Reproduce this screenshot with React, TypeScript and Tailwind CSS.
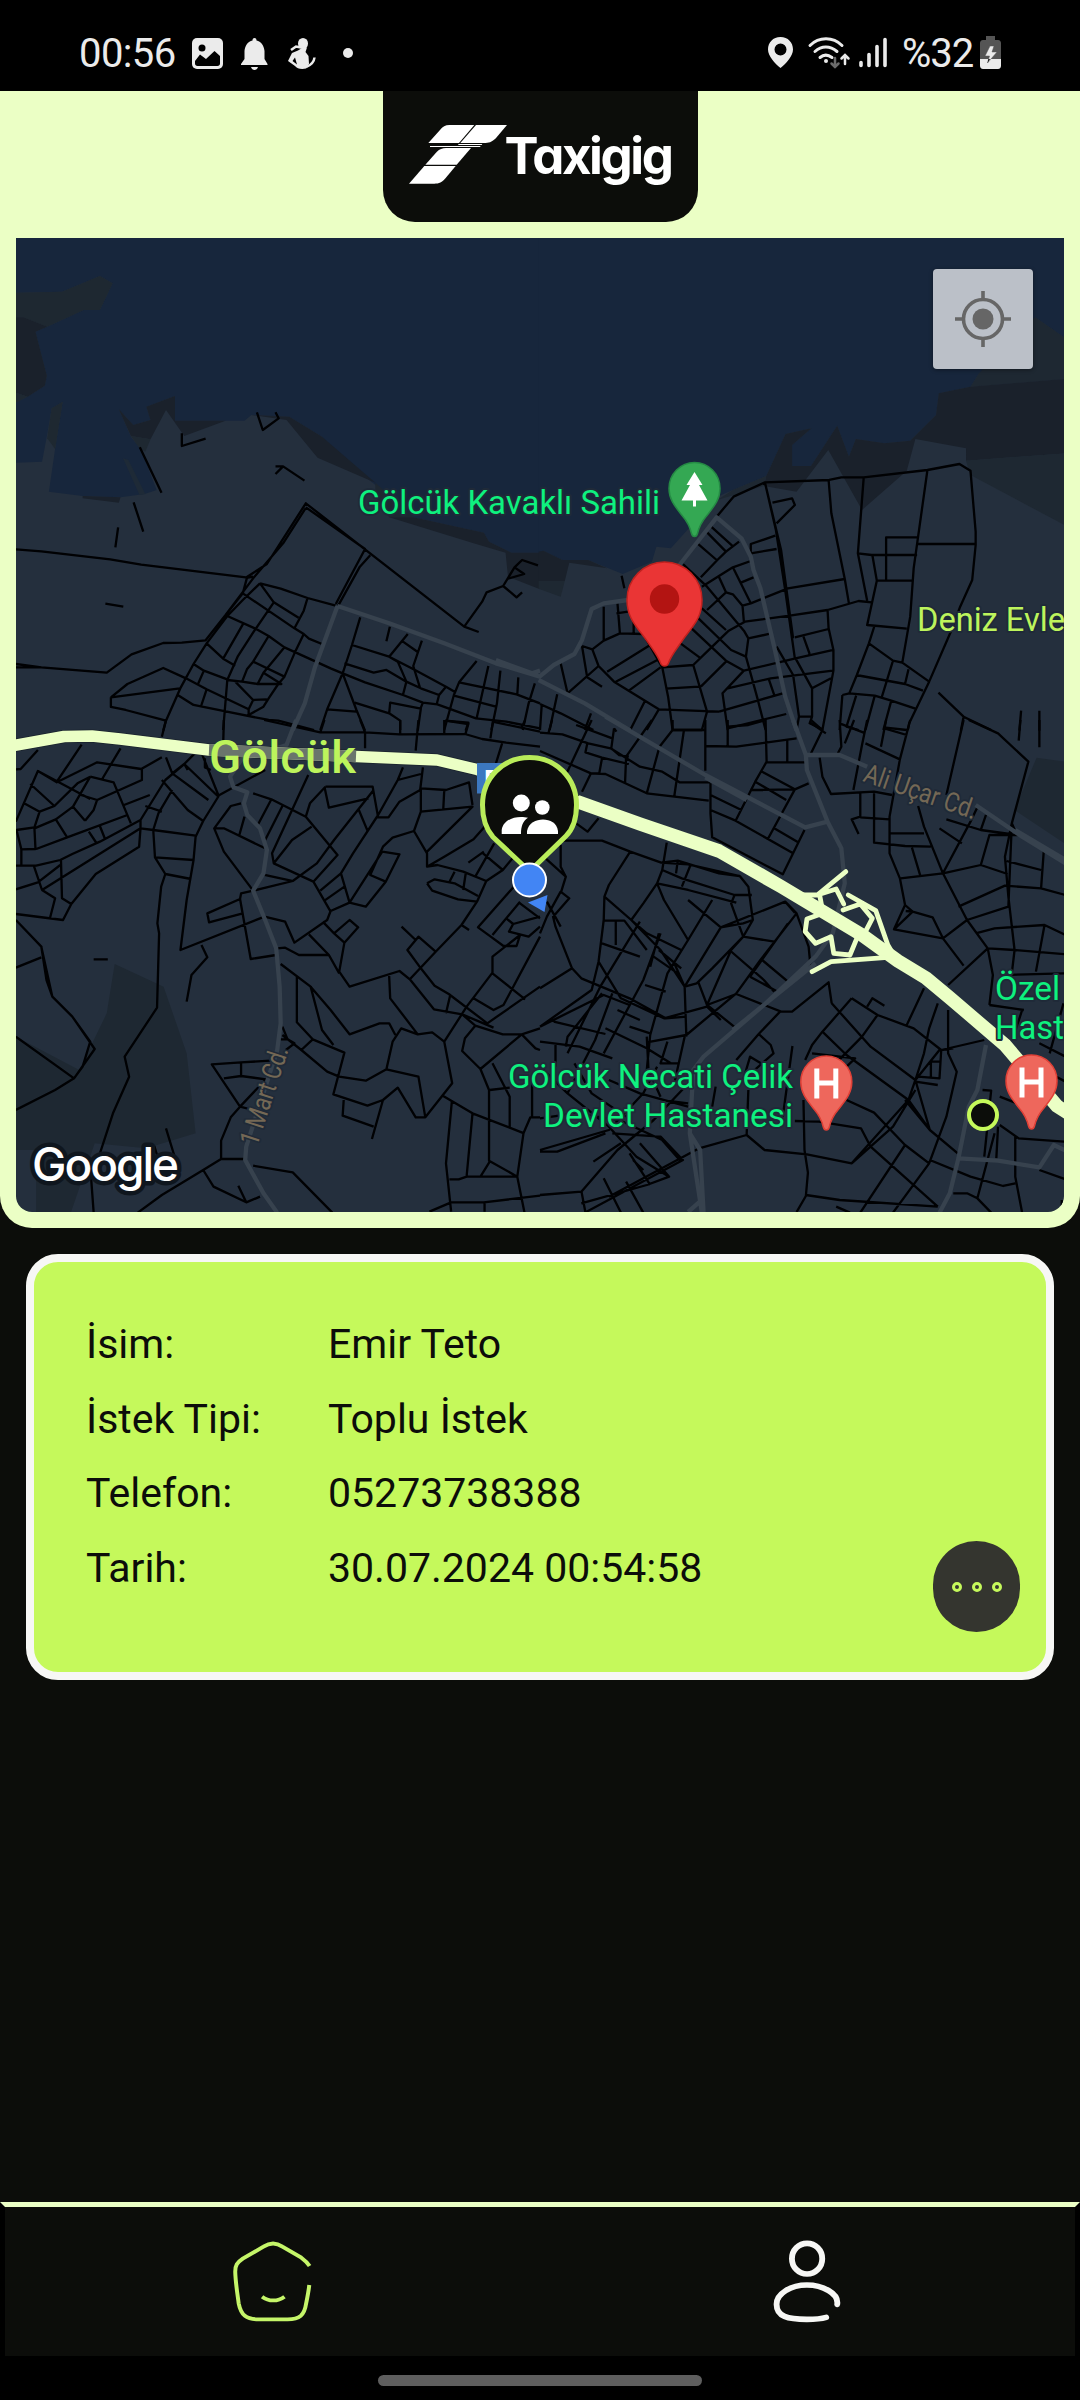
import React from "react";

/** Street geometry is stored per map tile; each tile keeps its own coordinate grid. */
type Tile = {
  transform: string;
  water?: string;
  patches?: { d: string; fill: string }[];
  avenues: string;
  streets: string;
};

const NW: Tile = {
  transform: "translate(0 230) scale(0.34439 0.33333)",
  water:
    "M46 20H1572V968H1485L1420 935 1405 908 1200 862 1090 765 1000 690 935 620 840 560 730 555 710 572H508V498L425 530 437 570 387 585 345 538 380 620 410 660 455 780 420 792 350 802 240 798 142 785 160 657 182 515 150 535 135 625 122 695 46 698V518L80 500 130 467 136 437 103 305 137 290 243 240H290L327 160 290 138 180 185 46 188Z",
  patches: [
    { d: "M46 188 180 185 290 138 327 160 290 240H243L137 290 68 262H46Z", fill: "#1e2831" },
    { d: "M46 262H68L137 290 103 305 136 437 130 467 80 500 46 488Z", fill: "#1a212b" },
    { d: "M46 488 80 500 46 518Z", fill: "#1e2831" },
    { d: "M425 530 508 498V572H655L535 618 482 540 437 628 380 618 345 538 387 585 437 570Z", fill: "#1a212b" },
    { d: "M380 618 437 628 422 665 405 655Z", fill: "#1e2831" },
    { d: "M150 535 182 515 160 657 137 625Z", fill: "#1e2831" },
    { d: "M357 685 373 690 422 792 405 795Z", fill: "#1e2a37" },
    { d: "M240 798 350 802 345 818 240 805Z", fill: "#1a212b" },
    { d: "M730 555 840 560 935 620 1090 758 922 683 832 570Z", fill: "#1a212b" },
    { d: "M1090 758 1200 862 1130 862 1090 800Z", fill: "#1e2731" },
    { d: "M1130 862H1200L1405 908 1420 935 1485 968H1568V1078L1475 1040 1468 968 1375 940Z", fill: "#1a212b" },
  ],
  avenues: "M980 1128 1130 1180 1290 1240 1440 1300 1568 1340M1440 1290 1545 1330 1568 1322M980 1128 915 1310 885 1420 850 1500",
  streets:
    "M746 547 763 600 809 565 800 547M528 610V648L597 626M800 709H822L884 752M822 709 800 732M406 652 469 788M388 817 416 905M343 892 335 952" +
    "M46 958 120 964 320 988 410 1004 720 1043 735 1040M306 1121 358 1130M46 1302 120 1312 310 1328 382 1273 474 1239 528 1238 597 1231 655 1155 705 1090 718 1040 775 1002 888 820 1348 1190 1390 1206M1348 1190 1400 1115 1413 1087 1461 1068 1500 1102 1516 1087M1461 1068 1494 1012 1516 990 1562 1006M1494 1012 1522 1032 1475 1046M46 1312 120 1312" +
    "M888 834 822 940 735 1045 655 1155M888 832 1060 957 975 1122M1075 976 1045 1010 982 1127M755 1060 815 1076 893 1104 975 1127M755 1060 705 1110 660 1158 600 1240 562 1302 525 1372 482 1472 474 1502" +
    "M755 1060 795 1117 867 1163M893 1104 882 1142 855 1195M705 1090 855 1195 882 1212 897 1226 935 1242M660 1158 740 1195 780 1218 826 1252 960 1315 995 1330 1060 1357 1170 1395 1228 1418 1270 1423 1382 1465 1470 1475 1568 1495M795 1117 740 1200 690 1280 660 1350 648 1500M708 1178 648 1286 683 1307M600 1240 648 1286M780 1218 735 1295 717 1318 703 1355M882 1212 855 1270 826 1340 808 1362 780 1405 765 1430 722 1455V1438L735 1410 775 1408M826 1252 765 1328 748 1362M735 1295 826 1340M765 1328 817 1362H748L703 1355 660 1350M683 1355 735 1410" +
    "M562 1302 592 1322 660 1348M592 1322 575 1362M322 1402 370 1362 474 1314 540 1345 600 1378 722 1438M322 1402 522 1375M322 1402V1431L365 1440 482 1472M516 1395 562 1425 648 1443 780 1470 808 1472 912 1500M600 1378 583 1431" +
    "M1046 1162 1022 1245 995 1330 950 1438 930 1500M1022 1245 1130 1280 1205 1320 1295 1370 1320 1385M1000 1300 1085 1328 1122 1320 1180 1355 1222 1375 1275 1395 1268 1423M1132 1190 1122 1234M1184 1212 1130 1280 1155 1295 1180 1355 1170 1395M1166 1232 1213 1266M1225 1232 1200 1308 1220 1375M995 1330 1035 1440 1060 1502M950 1438 1035 1445M1030 1418 1130 1450 1162 1472V1500M1130 1450 1133 1418 1222 1436 1213 1502M1228 1418 1220 1438M1295 1370 1275 1395" +
    "M1384 1293 1333 1357 1318 1395 1290 1500M1333 1357 1500 1393 1568 1420M1318 1397 1440 1430M1418 1308 1384 1465M1453 1322 1443 1420 1427 1500M1505 1342 1502 1395M1553 1360 1535 1420 1518 1500M1293 1472 1360 1478 1352 1502",
};

const NE: Tile = {
  transform: "translate(540 230) scale(0.34439 0.33333)",
  water:
    "M-4 20H1526V325L1438 262 1400 300 1275 430 1250 470 1158 490 1150 555 1075 632 1000 640 917 627 897 680 863 587 787 708H732V645L788 595 713 612 657 738 560 780 515 800 380 955 338 950 325 995 240 1032 140 990H65L10 962-4 965Z",
  patches: [
    { d: "M1438 262 1526 325V447L1250 470 1275 430 1340 360Z", fill: "#1e2832" },
    { d: "M1526 447 1250 470 1158 490 1150 555 1075 632 1000 640 917 627 897 680 863 587 787 708H732V645L788 595 713 612 657 738 650 768 745 785 837 660 935 840 1065 722 1090 627 1237 655V692L1526 670Z", fill: "#1a212b" },
    { d: "M1237 692 1526 670V887L1250 735Z", fill: "#1e2832" },
    { d: "M-4 965 10 962 65 990H140L195 1015 85 998 72 1053H-4Z", fill: "#1a212b" },
    { d: "M-4 1053H72L60 1100-4 1076Z", fill: "#1e2832" },
    { d: "M657 738 560 780 515 810 650 768Z", fill: "#1e2832" },
  ],
  avenues:
    "M405 1005 513 862 585 925 612 980 620 1020 640 1075 680 1250 712 1400 745 1502M255 1110 185 1120 150 1137 122 1230 100 1272 40 1305-4 1342M-4 1350 130 1420 262 1502",
  streets:
    "M513 860 562 800 653 757 840 750 875 742 940 742 1125 720 1218 702 1250 722 1265 905V945L1255 1050 1220 1130 1195 1200 1130 1355 1072 1480 1068 1500M653 757 685 900 712 1080 740 1285M653 757 700 960 735 1225M675 818 732 805 740 825 687 880M838 750 846 850 885 1047 897 1120M940 742 923 970 963 975 1095 975M923 970 950 1112M1125 720 1085 1015 1075 1160 1052 1298M1098 922H1005V1052M1098 942H1265M965 975 978 1052H1085M978 1052 950 1185 1065 1196" +
    "M972 1185 955 1240 920 1335 898 1390M955 1240 1025 1292 1052 1298 1130 1355M1025 1292 992 1403M918 1335 1060 1362 1112 1382M1070 1318 1060 1362M878 1395 898 1390 972 1397 1020 1412 1090 1436M878 1395 870 1500M918 1397 890 1490 925 1500M972 1397 945 1500M1020 1412 997 1500M997 1492 1065 1500M1157 1388 1230 1460 1310 1500M1230 1460 1222 1502M1397 1442 1392 1502M1450 1442V1502" +
    "M885 1047 720 1075 612 1120 588 1127 560 1093 540 1087 520 1042M963 1117 925 1113 835 1140 725 1157 595 1175 548 1202 500 1250 445 1305 355 1312M588 1127 592 1175M683 917 612 942V970L687 957M612 993 560 1012 470 1070M560 1012 612 1120M585 1057 620 1042M578 935 540 965 515 990 467 1042M457 940 513 990M483 905 540 965M497 890 558 947" +
    "M415 1002 485 1070 592 1202 605 1225 665 1212M605 1225 598 1280 630 1400 655 1500M485 1140 540 1087M470 1135 540 1200M460 1165 555 1260 598 1280M437 1192 540 1292 592 1322 742 1285 852 1260M405 1238 467 1285M592 1322 530 1390 545 1500M545 1375 670 1345 850 1322M467 1370 540 1295M520 1445 705 1390M545 1495 715 1452M665 1350 680 1395" +
    "M835 1140 838 1195 852 1260V1322L820 1500M740 1222 838 1197M765 1220 783 1272M742 1285 790 1375V1460H750M687 1250 735 1335 752 1460 745 1500M790 1375 845 1345M790 1460 783 1480 820 1498" +
    "M237 1037 245 1075M185 1130V1230M225 1120 232 1210M222 1150 255 1145M272 1170V1210M152 1258 185 1232 232 1210 300 1212M122 1248 152 1258 170 1308 215 1355 345 1438 520 1445M122 1248 137 1342 180 1370M170 1308 80 1390 60 1300M195 1325 320 1245M220 1355 345 1288M258 1382 350 1312M300 1212 355 1312 372 1400 385 1500H470L485 1445 445 1305M365 1376 462 1370M305 1412 262 1500M345 1438 310 1500M0 1422 60 1450 155 1500M50 1393 28 1500M148 1450 130 1500M0 1500 5 1425M215 1495 222 1505",
};

const SW: Tile = {
  transform: "translate(0 720) scale(0.34439 0.33333)",
  patches: [
    { d: "M333 732 475 800 542 1000 568 1240 425 1285 275 1270 205 1480H105V1290H46V950L230 1050 310 880Z", fill: "#1e2832" },
  ],
  avenues:
    "M860 0 832 75 700 120 668 170 678 202 718 217 708 250 718 285 755 325 775 390 765 460 735 512 770 600 802 685 812 800 815 910 805 990 715 1280 712 1320 765 1420 805 1478",
  streets:
    "M482 0 470 50M650 0 648 75M767 0 930 37 942 0M930 37H1060L1160 43 1350 42 1400 57 1470 68 1568 80M1046 0 1060 37V85M1162 0V42M1215 0 1207 92M1290 0V40M1293 2 1360 12 1352 40M1432 0 1424 55M1458 70 1440 130M1525 0 1515 22M1430 5 1568 35" +
    "M110 90 60 147 46 148M237 74 165 185M350 85 295 180M46 305 110 153 262 237M88 192 158 258M110 153 165 187 282 127 410 147 470 112M262 170 330 187 380 310M262 170 212 260 247 302M235 225 282 240 412 180V147M212 260 162 298 195 352M162 298 100 325 103 387 62 388 48 330 100 322 115 275 158 258 225 190 262 170M70 250 115 275M282 240 272 270 247 302M195 352 370 285M258 335 282 372M290 318 305 357M105 387 195 352M62 388V437H105L175 420 210 402 290 365 408 300 480 180 535 132 545 150M46 437H62M46 508 110 487 175 435M98 437 122 510 408 325 404 380 278 462 207 552 180 535 177 418M122 510 160 535 145 595M207 552 183 600 46 582M408 300V325L445 330 568 347M360 255 435 225M422 258 470 275M482 112 500 160 605 240M470 180 545 270 590 303M500 160 535 132 580 85 635 228M595 115V142L612 150M535 132 632 228 770 150" +
    "M500 210 460 280 445 330 450 412 480 462 468 500 457 610 462 640 456 863 362 1010 375 1070 328 1180 265 1380 272 1478M450 412 562 420M480 462 555 477M635 228 590 303 568 350 562 420 542 540 524 690 768 590 828 605 855 668 950 600 960 573 1015 548 1062 560 1120 485 1160 403 1110 395 1015 548M585 675 602 712 556 765 542 845M700 250 670 258 622 325 650 395 735 512M622 325 650 325 770 385M710 290 695 345M735 220 788 238 888 290 980 405 910 485M788 238 750 312M820 258 770 360M848 270 790 400 795 430 910 485 960 575M945 200 900 250 888 290M905 320 848 360 795 430M945 200H1082L1098 292H1128L1160 245 1220 210 1228 142M1170 142 1155 180 1098 285 1025 400 990 460 1015 548M943 205 955 263 1070 235M1085 210 970 360 920 430 850 483 735 512 700 520 697 537 602 580 607 607 705 580M895 165 848 270M1155 180 1222 162M1042 270 1067 332M990 460 930 512M1000 500 942 542M697 537 728 717 802 705M768 465 848 483" +
    "M1222 205V275L1372 260 1240 395M1222 205 1295 210 1362 187 1372 255M1290 210 1287 270M1222 275 1202 333 1240 400V440L1270 435 1345 455 1412 483 1460 450 1500 400M1202 333 1140 353 1112 380 1075 465 1120 485M1240 440 1290 410 1375 358 1420 305M1400 398 1460 450M1360 428 1405 395M1320 455 1303 490M1352 462 1345 510M1435 370 1380 470M1412 483 1385 545 1340 615 1362 630M1240 490 1262 478 1320 490 1388 528M1240 490 1255 512 1330 538 1385 545M1492 500 1388 622 1425 650 1462 678H1500L1510 645M1510 545 1430 645M1470 595 1490 612 1568 590M1490 612 1478 635 1535 650 1568 620M1510 550 1568 595" +
    "M970 640 1015 600 1040 622 1000 668 985 755 1015 800 1160 753 1190 778 1265 695 1340 615M937 605 970 640 1000 668M897 643 955 705 985 760M805 685 828 683 868 705H955M815 732 902 800 960 870 1015 943 1102 910H1130L1148 945M862 768V907L908 958 875 990M902 800 935 930 968 975M1130 768 1133 835 1213 943 1165 925 1140 965 1122 1048 1062 1082 985 1070 950 1055 875 990 820 945M908 958 1000 998 968 1123 1067 1157 1112 1140 1155 1103 1207 1192H1235L1215 1070 1122 1048M1112 1140 1080 1257M998 1140 995 1187 1085 1220M1213 943 1255 937 1290 965 1313 1090 1235 1192M1190 778 1260 868 1342 883 1433 923M1166 620 1207 660M1265 695 1215 650 1183 690 1222 745 1262 797 1303 822 1415 910 1568 800M1308 822 1295 880M1510 645 1430 710V758L1355 860 1290 965M1430 760 1525 838M1375 835 1433 870 1462 855 1568 650M1342 883 1380 917 1460 943H1515L1568 925M1380 917 1350 955 1342 993 1395 1047 1515 943 1555 985 1568 990" +
    "M1395 1047 1420 1110V1322L1502 1370 1520 1240 1540 1192H1568M1430 1030 1480 1130V1225M1422 1110 1480 1103M1545 1090V1192M1282 1125 1372 1180 1522 1240M1312 1145 1295 1330 1310 1475M1372 1180 1355 1368M1305 1378H1332L1355 1370H1502L1523 1478M1422 1325 1395 1370M1247 1475 1310 1447H1405L1568 1427M1407 1447V1475" +
    "M46 600 120 680 152 830 210 890 275 987 215 1075 160 1110 46 1170M46 743 120 712M120 680 135 780 152 830M210 890 262 965 240 1040 215 1075 46 950M272 718H313" +
    "M482 1225 510 1320M448 1278 465 1335M785 1022 700 1027 615 1033 697 1160 670 1192 642 1262V1317H710M650 1075 700 1068 772 1078 697 1160 735 1170M700 1027V1068M642 1317 590 1350 470 1425 400 1478M590 1350 620 1400 715 1447 755 1430M692 1397 715 1447M735 1337 850 1357 965 1478M820 920 835 958 855 970 830 990M815 958H835",
};

const SE: Tile = {
  transform: "translate(540 720) scale(0.34439 0.33333)",
  patches: [{ d: "M1442 113 1526 125V372L1378 270Z", fill: "#1e2832" }],
  avenues:
    "M190-10 480 165 770 322 835 305M480 172 600 240M735 0 772 105 775 150 835 305 875 385 885 490 850 640 800 710 650 855 475 1010 445 1050 435 1240 465 1290 475 1478M800 730 560 930M435 1240 470 1478M430 1476 470 1440M772 105H870L950 140M1265 255 1400 350 1526 430M1380 330 1526 420M1295 975 1270 1110 1245 1160 1215 1315 1190 1420 1160 1478M1215 1315 1330 1322 1450 1342 1492 1275 1526 1292",
  streets:
    "M35 0 25 38M0 38 65 43 140 70 205 85 290 140 355 155 405 187H495M150 0 75 165M215 25 207 85 230 105 258 110M325 0 250 110 247 188M137 72 132 97 180 113 258 132M105 15 210 55M385 0V30L347 80 310 220M385 30H478M418 30 390 228M0 93 148 160 122 215M180 115 172 160 148 160M148 160 190 162 310 220 490 242M545 20 605 15 655 0 658 125 625 185 568 302M480 0V78L570 80 745 55M545 0V80M480 78V152M718 58V127M658 127H775M645 155 740 208 780 190M625 185 715 240M610 210 740 208 660 360M495 190V280L500 352 705 463 768 330M495 225 585 270M495 270 568 302 735 400M680 325 752 368" +
    "M787 0 820 30 787 100M785 8 830 40M870 0 875 80 865 100M870 10 940 38M885 70 912 0M950 0 935 75 910 210M945 70 1045 118M1005 0 990 80M1000 25 1065 45M1075 0 1045 118 1015 290V400L1045 475 1060 555 1028 628 1170 655M812 113 820 170 845 222 970 215 1022 225M930 215V290L905 298 925 342M970 220V368L1060 378 1135 380M930 292 1015 298M1015 340H1115M1230 0 1180 225M1245 0 1330 40 1418 125 1370 310 1350 410 1360 530 1378 690M1395 0 1390 62M1450 0V82M1098 258 1115 320 1170 460 1240 600 1300 685M1270 262 1250 305 1170 460M1160 325 1225 370M1180 298 1280 330 1385 345H1305L1280 435M1295 285 1280 330M1080 383 1105 470M1047 475 1170 460 1280 435 1358 462M1355 423 1455 450M1463 390 1455 505M1215 560 1350 497 1455 505 1526 525M1240 600 1360 560 1370 310 1385 345M1060 555 1082 575 1028 628M1082 575 1140 592 1170 655 1230 737M1062 573 1082 575M1265 640 1320 625 1465 615 1526 645M1170 655 1240 600M1300 685 1378 690 1526 703M1300 685 1185 795M1300 685 1315 765 1305 855M1378 690 1370 760M1465 615 1440 755M1340 765 1526 760M1305 855 1405 870" +
    "M60 362H180L262 395 352 428 430 433 580 468 605 500 618 600 590 650 680 665M352 428 400 422 520 460 580 468M60 375V440L75 470M105 310 138 335 170 295M368 368 355 450 340 490 300 550 265 600M262 395 200 495 187 530 185 600 170 725 150 810 0 920M187 530 265 600 350 690 420 800 390 730M187 602H245L310 690M220 602V675M180 670 290 710M340 490 430 510 570 548M437 435 412 500M355 450 412 475 565 525 555 550 590 650 555 690 485 855 570 925M340 490 360 540 430 660M500 540 430 660 370 760 320 945 310 1050M400 422 395 460M565 525H615M420 800 455 790 500 745 590 650M550 690 650 780 680 815M610 770 720 610M645 720 720 785M610 770 690 815M525 622 712 545 745 580 640 720 570 820 425 945 310 967M525 622 590 610 618 600M745 580 780 680 785 735M712 545 740 578M430 540 525 622 420 800M420 800 425 950M460 787 485 855 570 822 700 875H732L838 787 847 850M525 900 485 860 360 895 235 835 170 725M0 805 93 745 45 620 38 590 85 535 60 515 20 590 0 640M20 545 60 620M0 400 75 470 60 520M93 745 120 775 260 835 365 895 425 890M290 605 175 800 80 1000M350 640 300 780 185 1000M265 600 310 640 410 690M345 690 410 745M330 710 400 760M345 640 320 740M0 920 185 825 260 855M180 820 80 950 75 980M40 905 190 942M210 820 160 960 80 1120M0 965 115 980 210 1015M45 975V1040M190 925 310 985 380 1030M225 870 290 900M260 920 320 940M305 795 365 815M310 950 315 1050 350 1130M370 965 350 1030H400M420 950 390 1090" +
    "M0 1040 80 1120 200 1220 280 1310 375 1370 310 1395 120 1450M100 1030 150 1120 250 1190M200 1080 290 1120 430 1160M340 1040 300 1120 200 1230 0 1290M440 1080 330 1200 225 1290 120 1415 0 1425M350 1140 430 1150M510 1100 500 1160M0 1195 100 1180 230 1200M210 1240 350 1250 415 1320 130 1478M155 1325 235 1270M600 1245 462 1285 200 1430M600 1245 652 1290 775 1303 905 1330 1070 1140 1090 1080 1160 990M600 1245 605 1110M350 1255 410 1325M260 1300 320 1395M120 1412 132 1478M185 1375 235 1478M250 1385 300 1478M270 1320 300 1350M230 1200 355 1260M290 1270 375 1370M0 1295 50 1295 190 1240" +
    "M697 875 635 942 570 1020M635 942 670 975 678 1000 590 1080 610 1010 650 1035M733 978 705 1190M847 850 960 980 1090 1080 1132 1230M905 835 820 935 790 975 770 1020M905 835 980 885 1085 925 1165 990 1290 960M950 860 965 835 1000 857M980 885 935 950 830 1060M820 935 890 1005 1070 1140 1132 1230 1213 1300M790 1000 915 1015 865 1065M890 1140 970 1178 1060 1275 1130 1330M765 1140 768 1290 778 1358 772 1428 745 1476M740 1203 810 1205 932 1225 960 1280 1155 1460M772 1425 870 1440 1155 1460M1213 1300 1132 1230 1060 1140M1060 1275 930 1478M1130 1330 1025 1478M860 1460 900 1478M905 1330 1025 1220 1090 1110M1115 805 1065 915M1155 850 1130 925 1115 1000 1090 1080M1185 870V1000L1210 1055 1180 1190 1130 1330M1098 1070 1160 1075 1165 990M1090 1085 1155 1095M1135 1070V1025H1165M1132 1320 1250 1370 1345 1398 1380 1390M1200 1420H1240L1270 1435 1310 1478M1380 1250V1370L1400 1478M1320 1240 1270 1435M1285 1110 1310 1112 1290 1310M1335 1215 1390 1255 1526 1265M1330 1220 1325 1315M1335 1130 1385 1150M1450 1350 1526 1378M1515 1440V1478M1165 990 1200 985M1450 970 1526 1010M1480 1060 1526 1085M1400 870 1375 950M1520 850 1480 1000",
};

const TILES = [NW, NE, SW, SE];

const HIGHWAY =
  "M14 745.500 64 736.500 92 736 120 739 209 750 356 756.500 437 760 477 769.500 577 801.500 640 824 719 851 781 886.500 862 935 898 961 926 978 950 998 1005 1045 1057 1106 1068 1113";
const HIGHWAY_EAST = "M577 801.500 640 824 719 851 781 886.500 862 935 898 961 926 978 950 998 1005 1045 1057 1106 1068 1113";

function TileShapes({ tile }: { tile: Tile }) {
  return (
    <g transform={tile.transform}>
      {tile.water && <path d={tile.water} fill="#17263c" />}
      {tile.patches?.map((p) => (
        <path key={p.d} d={p.d} fill={p.fill} />
      ))}
    </g>
  );
}

function Pin({ x, y, fill, stroke, children }: { x: number; y: number; fill: string; stroke: string; children: React.ReactNode }) {
  return (
    <g transform={`translate(${x} ${y})`}>
      <path
        d="M0-25.500C14-25.500 25.500-14 25.500.500C25.500 12 19 19 12 28C6 35 4.500 39 3 45.500C2 49.500-2 49.500-3 45.500C-4.500 39-6 35-12 28C-19 19-25.500 12-25.500.500C-25.500-14-14-25.500 0-25.500Z"
        fill={fill}
        stroke={stroke}
        strokeWidth="1.500"
      />
      {children}
    </g>
  );
}

const LABEL = { fontFamily: "Roboto, sans-serif", stroke: "#1f2a38", strokeWidth: 4, paintOrder: "stroke", strokeLinejoin: "round" } as const;

function CityMap() {
  return (
    <svg viewBox="16 238 1048 974" className="block h-[974px] w-[1048px]">
      <rect x="16" y="238" width="1048" height="974" fill="#242f3d" />
      {TILES.map((t) => (
        <TileShapes key={t.transform} tile={t} />
      ))}
      {TILES.map((t) => (
        <g key={t.transform} transform={t.transform}>
          <path d={t.streets} fill="none" stroke="#000103" strokeWidth="2.300" strokeLinejoin="round" vectorEffect="non-scaling-stroke" />
        </g>
      ))}
      {TILES.map((t) => (
        <g key={t.transform} transform={t.transform}>
          <path d={t.avenues} fill="none" stroke="#37424e" strokeWidth="4.300" strokeLinejoin="round" vectorEffect="non-scaling-stroke" />
        </g>
      ))}

      {/* State highway and interchange ramps */}
      <g fill="none" strokeLinejoin="round">
        <path d={HIGHWAY} stroke="#1a232c" strokeWidth="13" />
        <path d={HIGHWAY} stroke="#ebffc5" strokeWidth="11.500" />
        <path d={HIGHWAY_EAST} stroke="#ebffc5" strokeWidth="13.500" />
        <path d="M209 750 356 756.500" stroke="#6a756c" strokeWidth="11.500" />
        <g transform={SE.transform}>
          <path
            d="M735 525H805L888 455M805 525 860 507 882 552M812 525 822 580 775 597 770 635 800 670 845 650 853 700 900 705 920 655M895 525 975 572 1010 675 1030 710M880 570 930 552 965 595 945 635H900M790 755 845 725 1010 712"
            stroke="#ebffc5"
            strokeWidth="4.800"
            strokeLinecap="round"
            vectorEffect="non-scaling-stroke"
          />
        </g>
      </g>

      {/* Place labels */}
      <g {...LABEL}>
        <text x="358" y="513.500" fontSize="34" fill="#0ef17f" textLength="302" lengthAdjust="spacingAndGlyphs">Gölcük Kavaklı Sahili</text>
        <text x="793" y="1088" textAnchor="end" fontSize="34" fill="#0ef17f" textLength="285" lengthAdjust="spacingAndGlyphs">Gölcük Necati Çelik</text>
        <text x="793" y="1127" textAnchor="end" fontSize="34" fill="#0ef17f" textLength="250" lengthAdjust="spacingAndGlyphs">Devlet Hastanesi</text>
        <text x="995" y="1000" fontSize="34" fill="#0ef17f" textLength="65" lengthAdjust="spacingAndGlyphs">Özel</text>
        <text x="995" y="1039" fontSize="34" fill="#0ef17f" textLength="69" lengthAdjust="spacingAndGlyphs">Hast</text>
        <text x="917" y="630.500" fontSize="34" fill="#bdf45c" textLength="148" lengthAdjust="spacingAndGlyphs">Deniz Evle</text>
        <text x="209" y="773" fontSize="47" fontWeight="500" fill="#bdf45c" stroke="none" textLength="147" lengthAdjust="spacingAndGlyphs">Gölcük</text>
        <text x="0" y="0" fontSize="27" fill="#746855" transform="translate(257 1147) rotate(-72)" textLength="102" lengthAdjust="spacingAndGlyphs">1 Mart Cd.</text>
        <text fontSize="27" fill="#746855" transform="translate(862 781) rotate(19)" textLength="118" lengthAdjust="spacingAndGlyphs">Ali Uçar Cd.</text>
      </g>

      {/* Park */}
      <Pin x={694.5} y={488} fill="#34a853" stroke="#258a44">
        <path d="M0-16 8-3H4.500L13 12.500H1.500V18.500H-1.500V12.500H-13L-4.500-3H-8Z" fill="#fff" />
      </Pin>

      {/* Destination */}
      <path d="M664.500 562C685 562 702 579 702 600C702 619 691 628 682 641C673 654 671 656 668.500 663C667 667 662 667 660.500 663C658 656 656 654 647 641C638 628 627 619 627 600C627 579 644 562 664.500 562Z" fill="#ea3535" stroke="#c3221f" strokeWidth="1.500" />
      <circle cx="664.500" cy="599" r="14.700" fill="#b31412" />

      {/* Hospitals */}
      {[{ x: 826.3, y: 1081.5 }, { x: 1031.5, y: 1080.5 }].map((p) => (
        <Pin key={p.x} x={p.x} y={p.y} fill="#ee675c" stroke="#e04137">
          <path d="M-9.500-13V17M9.500-13V17M-9.500 1.500H9.500" stroke="#fff" strokeWidth="5" fill="none" />
        </Pin>
      ))}

      <circle cx="983" cy="1115" r="14" fill="#0c0d0a" stroke="#c5f95b" strokeWidth="4" />

      {/* Parking sign, rider pin and own position */}
      <rect x="477" y="763" width="36" height="30.500" fill="#3c78c0" />
      <text x="484" y="790" fontFamily="Roboto, sans-serif" fontSize="27" fontWeight="700" fill="#fff">P</text>
      <path d="M528 902.500 547.500 895 544.500 912Z" fill="#4285f4" />
      <path d="M526 868 493 837C485 828 482.500 816 482.500 805C482.500 778 503 757.500 529.500 757.500C556 757.500 576.500 778 576.500 805C576.500 816 574 828 566 836L533 868Z" fill="#0c0d0a" stroke="#b9ec5a" strokeWidth="5" />
      <g fill="#fff">
        <circle cx="521.300" cy="803" r="8.500" />
        <circle cx="542.300" cy="807.500" r="7.300" />
        <path d="M501.700 834V830C503 821 512 817 521 817C523.500 817 526 817.300 528 817.800C523 821 521 826 521 834Z" />
        <path d="M527 834V831C528.500 823 536 819.500 543 819.500C550 819.500 557 823 558 831V834Z" />
      </g>
      <circle cx="529.500" cy="880" r="16.500" fill="#4285f4" stroke="#fff" strokeWidth="2" />

      {/* Map attribution */}
      <text x="32" y="1181" fontFamily="Inter, sans-serif" fontSize="46" fontWeight="500" fill="#fff" stroke="#0f161e" strokeWidth="9" strokeLinejoin="round" paintOrder="stroke" className="tracking-[-2px]">
        Google
      </text>
    </svg>
  );
}

function StatusBar() {
  return (
    <div className="flex h-[91px] items-start bg-black pt-[30px] pl-[79px] pr-[79px] text-[#ebebeb]">
      <span className="w-[113px] whitespace-nowrap text-[40px] leading-[48px] tracking-[-0.6px]">00:56</span>
      <svg viewBox="192 31 170 48" className="h-[48px] w-[170px]" fill="#ebebeb">
        <rect x="192" y="39" width="31" height="31" rx="5" />
        <circle cx="202" cy="49" r="3.500" fill="#000" />
        <path d="M195 62 200 55.500 206 60 214.500 52 220 57V64.500C220 66 219 67 217.500 67H197.500C196 67 195 66 195 64.500Z" fill="#000" />
        <path d="M254.500 39C256 39 256.500 40 256.500 41.500C261 42.500 264 46.500 264.500 52V60L267.500 65V66H241V65L244.500 60V52C245 46.500 248 42.500 252.500 41.500C252.500 40 253 39 254.500 39ZM251 68H258C257.500 70 256 71 254.500 71C253 71 251.500 70 251 68Z" />
        <ellipse cx="303" cy="44.500" rx="5" ry="5.500" />
        <path d="M302 49 307 48.500 305.500 53 308.500 57 309 65 306 69.500C301 70.500 297 69.500 295 67L288 62 292 54 298 51.500ZM295 58.500 292.500 62 297 65.500Z" fillRule="evenodd" />
        <path d="M291 51 296 47.500 301 48.500M306 68C310 66.500 314 64 314.500 58.500" stroke="#ebebeb" strokeWidth="2.500" fill="none" />
        <circle cx="348" cy="54" r="5" />
      </svg>
      <div className="flex-1" />
      <svg viewBox="766 31 122 48" className="h-[48px] w-[122px]" fill="none" stroke="#ebebeb" strokeLinecap="round">
        <path d="M780.500 38C788 38 793 43.500 793 50.500C793 57 786 64.500 780.500 69C775 64.500 768 57 768 50.500C768 43.500 773 38 780.500 38ZM780.500 44.500A6 6 0 1 0 780.500 56.500A6 6 0 1 0 780.500 44.500Z" fill="#ebebeb" stroke="none" fillRule="evenodd" />
        <path d="M810 46.500C819 37.500 833 37.500 842 46.500M815 52.500C821.500 46.500 830 46.500 837 52.500M820 58.500C823.500 55.500 828 55.500 832 58.500" strokeWidth="3" />
        <circle cx="826" cy="62" r="2" fill="#ebebeb" stroke="none" />
        <path d="M835 59V68M831.500 64.500 835 68 838.500 64.500" stroke="#6b6b6b" strokeWidth="2.500" />
        <path d="M845 65V56.500M841.500 59.500 845 56 848.500 59.500" strokeWidth="2.500" />
        <path d="M861 63.500V66.500M869 55.500V66.500M877 47.500V66.500M885 40.500V66.500" strokeWidth="3.600" />
      </svg>
      <span className="ml-[14px] w-[78px] whitespace-nowrap text-[40px] leading-[48px] tracking-[-1px]">%32</span>
      <svg viewBox="980 31 21 48" className="h-[48px] w-[21px]">
        <path d="M986 37H995V41H998C1000 41 1001 42.500 1001 44V60H980V44C980 42.500 981 41 983 41H986Z" fill="#555" />
        <path d="M980 60H1001V66.500C1001 68.500 1000 70 998 70H983C981 70 980 68.500 980 66.500Z" fill="#ebebeb" />
        <path d="M990 47H994L992 53H997L987.500 64 989.500 57H985Z" fill="#ebebeb" stroke="#555" strokeWidth="0.500" />
        <path d="M990 60H988.500L987.500 64Z" fill="#000" />
      </svg>
    </div>
  );
}

function Brand() {
  return (
    <div className="relative mx-auto h-[131px] w-[315px] rounded-b-[32px] bg-[#0c0d0a]">
      <svg viewBox="383 91 130 131" className="block h-[131px] w-[130px]">
        <g transform="translate(390 100) scale(0.33333)" fill="#fff">
          <path d="M115 129 150 90C158 80 166 75 178 75H253L207 129Z" />
          <path d="M258 75H351L320 112C309 124 300 129 287 129H211Z" />
          <path d="M205 132H277L275 135H205ZM120 138H272L270 141H120Z" />
          <path d="M106 194 140 156C149 147 157 144 168 144H243L200 194Z" />
          <path d="M103 198H197L167 234C156 247 147 251 133 251H57Z" />
        </g>
      </svg>
      <span className="absolute top-[35px] left-[122px] font-['Inter',sans-serif] text-[51px] leading-[60px] font-bold tracking-[-2.4px] text-white [font-feature-settings:'cv11'_1,'ss03'_1]">
        Taxigig
      </span>
    </div>
  );
}

const DETAILS = [
  { label: "İsim:", value: "Emir Teto" },
  { label: "İstek Tipi:", value: "Toplu İstek" },
  { label: "Telefon:", value: "05273738388" },
  { label: "Tarih:", value: "30.07.2024 00:54:58" },
];

function RequestCard() {
  return (
    <section className="relative mx-[26px] mt-[26px] h-[426px] rounded-[32px] border-8 border-[#f7f7f5] bg-[#c5f95b] pt-[46px] pl-[52px] text-[41px] text-[#0c0d0a]">
      <dl>
        {DETAILS.map((row) => (
          <div key={row.label} className="flex h-[74.4px] items-center whitespace-nowrap">
            <dt className="w-[242px]">{row.label}</dt>
            <dd>{row.value}</dd>
          </div>
        ))}
      </dl>
      <button className="absolute top-[279px] right-[26px] flex h-[91px] w-[87px] items-center justify-center gap-[10px] rounded-[44px] bg-[#34352f]" aria-label="Seçenekler">
        <span className="h-[10px] w-[10px] rounded-full border-[3.4px] border-[#c5f95b]" />
        <span className="h-[10px] w-[10px] rounded-full border-[3.4px] border-[#c5f95b]" />
        <span className="h-[10px] w-[10px] rounded-full border-[3.4px] border-[#c5f95b]" />
      </button>
    </section>
  );
}

function TabBar() {
  return (
    <nav className="grid h-[154px] grid-cols-2 border-x-[5px] border-t-[5px] border-x-black border-t-[#ebffc5] bg-[#0c0d0a]">
      <button aria-label="Ana sayfa">
        <svg viewBox="5 2207 535 149" className="block h-[149px] w-[535px]" fill="none" stroke="#c5f569">
          <g transform="translate(0 2180) scale(0.34439 0.33333)" strokeWidth="11.500">
            <path d="M899 258C893 248 888 243 875 233L820 200C802 187 784 187 765 200L705 236C688 248 683 256 683 275C684 310 690 345 693 370C700 406 715 418 750 418H835C870 418 884 406 889 370C893 350 896 335 898 315" />
            <path d="M761 350C780 365 807 365 826 350" />
          </g>
        </svg>
      </button>
      <button aria-label="Profil">
        <svg viewBox="540 2207 535 149" className="block h-[149px] w-[535px]" fill="none" stroke="#f7f7f5" strokeLinecap="round">
          <g transform="translate(540 2180) scale(0.34439 0.33333)" strokeWidth="17">
            <ellipse cx="775.500" cy="236" rx="44" ry="46" />
            <path d="M863 373C868 340 820 315 775 315C727 315 687 342 687 372C686 410 720 418 775 418C795 418 815 417 831 412" />
          </g>
        </svg>
      </button>
    </nav>
  );
}

export default function App() {
  return (
    <main className="flex h-[2400px] w-[1080px] flex-col overflow-hidden bg-[#0c0d0a] font-['Roboto',sans-serif]">
      <StatusBar />
      <header className="h-[1137px] rounded-b-[32px] bg-[#ebffc5]">
        <Brand />
        <div className="relative mx-[16px] mt-[16px] h-[974px] overflow-hidden rounded-b-[16px]">
          <CityMap />
          <button className="absolute top-[31px] right-[31px] h-[100px] w-[100px] rounded-[4px] bg-[#bbc0c8] shadow-[0_1px_4px_rgba(0,0,0,0.4)]" aria-label="Konumum">
            <svg viewBox="0 0 100 100" className="block h-full w-full" fill="none" stroke="#666" strokeWidth="3.600">
              <circle cx="50" cy="50" r="19.500" />
              <circle cx="50" cy="50" r="10.500" fill="#666" stroke="none" />
              <path d="M50 22V30M50 70V78M22 50H30M70 50H78" />
            </svg>
          </button>
        </div>
      </header>
      <RequestCard />
      <div className="flex-1" />
      <TabBar />
      <div className="flex h-[44px] justify-center bg-black pt-[19px]">
        <div className="h-[11px] w-[324px] rounded-full bg-[#5e5e5e]" />
      </div>
    </main>
  );
}
